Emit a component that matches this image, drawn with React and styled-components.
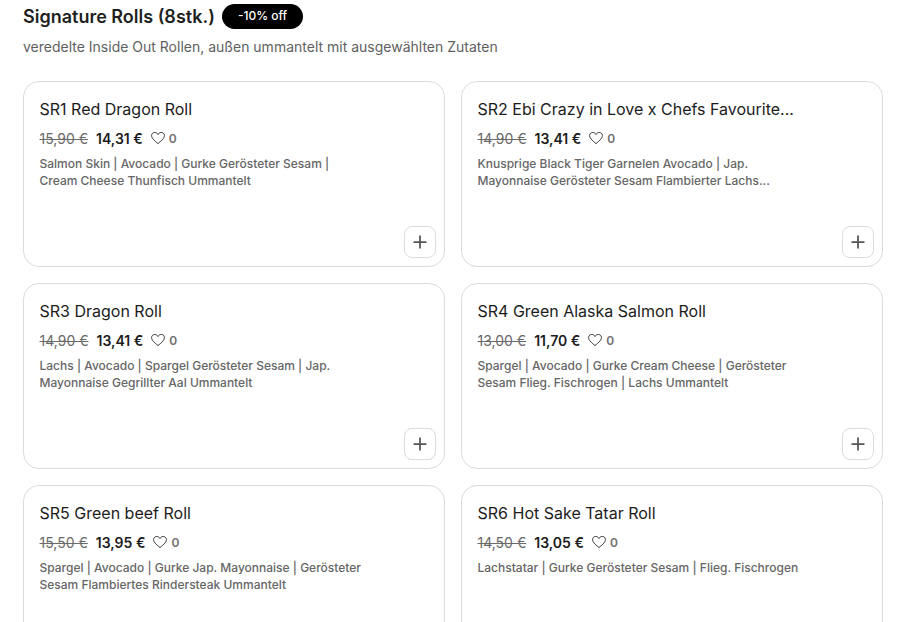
import React from 'react';
import styled, { createGlobalStyle } from 'styled-components';
import { Plus } from 'lucide-react';

const GlobalStyle = createGlobalStyle`
  html, body {
    margin: 0;
    height: 622px;
    overflow: hidden;
    background: #ffffff;
    font-family: Inter, "Liberation Sans", sans-serif;
  }
`;

const Page = styled.div`
  width: 860px;
  padding: 4px 19px 0 23px;
`;

const Heading = styled.div`
  display: flex;
  align-items: flex-start;
  gap: 7px;
  height: 25px;
`;

const Title = styled.h2`
  margin: 1px 0 0;
  font-size: 18px;
  font-weight: 600;
  line-height: 24px;
  color: #1f1f1f;
`;

const Badge = styled.span`
  display: flex;
  align-items: center;
  height: 25px;
  padding: 0 16px 2px;
  box-sizing: border-box;
  border-radius: 13px;
  background: #000000;
  color: #ffffff;
  font-size: 12px;
  font-weight: 500;
`;

const Subtitle = styled.p`
  margin: 9px 0 25px;
  font-size: 14px;
  line-height: 18px;
  color: #5f5f5f;
`;

const Grid = styled.div`
  display: grid;
  grid-template-columns: 422px 422px;
  gap: 16px;
`;

const Card = styled.div`
  height: 186px;
  box-sizing: border-box;
  padding: 16px 16px 0 15.5px;
  display: flex;
  flex-direction: column;
  position: relative;
  border: 1px solid #dcdcdc;
  border-radius: 16px;
`;

const Name = styled.div`
  font-size: 16px;
  line-height: 22px;
  color: #1c1c1c;
`;

const PriceRow = styled.div`
  display: flex;
  align-items: center;
  margin-top: 8px;
  height: 20px;
`;

const OldPrice = styled.span`
  font-size: 14px;
  color: #6a6a6a;
  text-decoration: line-through;
  margin-right: 8px;
`;

const Price = styled.span`
  font-size: 14px;
  font-weight: 600;
  color: #1c1c1c;
  margin-right: 8px;
`;

const Likes = styled.span`
  display: flex;
  align-items: center;
  gap: 4px;
  font-size: 12px;
  font-weight: 600;
  color: #6f6f6f;
`;

const Description = styled.p`
  margin: 7px 0 0;
  max-width: 330px;
  font-size: 12px;
  font-weight: 500;
  line-height: 17px;
  color: #666666;
`;

const AddButton = styled.button`
  position: absolute;
  right: 8px;
  bottom: 8px;
  width: 32px;
  height: 32px;
  padding: 0;
  display: flex;
  align-items: center;
  justify-content: center;
  background: #ffffff;
  border: 1px solid #dcdcdc;
  border-radius: 8px;
  color: #555555;
`;

const Heart = () => (
  <svg width="14" height="14" viewBox="0 0 24 24" fill="none" stroke="#2e2e2e" strokeWidth="1.7" strokeLinejoin="round">
    <path d="M12 21.5C5 15.8 1 12 1 7.8 1 4.6 3.5 2.5 6.4 2.5c2.3 0 4.4 1.2 5.6 3.5 1.2-2.3 3.3-3.5 5.6-3.5C20.5 2.5 23 4.6 23 7.8c0 4.2-4 8-11 13.7z" />
  </svg>
);

const rolls = [
  { name: 'SR1 Red Dragon Roll', old: '15,90 €', price: '14,31 €', desc: 'Salmon Skin | Avocado | Gurke Gerösteter Sesam | Cream Cheese Thunfisch Ummantelt' },
  { name: 'SR2 Ebi Crazy in Love x Chefs Favourite...', old: '14,90 €', price: '13,41 €', desc: 'Knusprige Black Tiger Garnelen Avocado | Jap. Mayonnaise Gerösteter Sesam Flambierter Lachs...' },
  { name: 'SR3 Dragon Roll', old: '14,90 €', price: '13,41 €', desc: 'Lachs | Avocado | Spargel Gerösteter Sesam | Jap. Mayonnaise Gegrillter Aal Ummantelt' },
  { name: 'SR4 Green Alaska Salmon Roll', old: '13,00 €', price: '11,70 €', desc: 'Spargel | Avocado | Gurke Cream Cheese | Gerösteter Sesam Flieg. Fischrogen | Lachs Ummantelt' },
  { name: 'SR5 Green beef Roll', old: '15,50 €', price: '13,95 €', desc: 'Spargel | Avocado | Gurke Jap. Mayonnaise | Gerösteter Sesam Flambiertes Rindersteak Ummantelt' },
  { name: 'SR6 Hot Sake Tatar Roll', old: '14,50 €', price: '13,05 €', desc: 'Lachstatar | Gurke Gerösteter Sesam | Flieg. Fischrogen' },
];

export default function App() {
  return (
    <Page>
      <GlobalStyle />
      <Heading>
        <Title>Signature Rolls (8stk.)</Title>
        <Badge>-10% off</Badge>
      </Heading>
      <Subtitle>veredelte Inside Out Rollen, außen ummantelt mit ausgewählten Zutaten</Subtitle>
      <Grid>
        {rolls.map((roll) => (
          <Card key={roll.name}>
            <Name>{roll.name}</Name>
            <PriceRow>
              <OldPrice>{roll.old}</OldPrice>
              <Price>{roll.price}</Price>
              <Likes><Heart />0</Likes>
            </PriceRow>
            <Description>{roll.desc}</Description>
            <AddButton><Plus size={20} strokeWidth={2.1} /></AddButton>
          </Card>
        ))}
      </Grid>
    </Page>
  );
}
